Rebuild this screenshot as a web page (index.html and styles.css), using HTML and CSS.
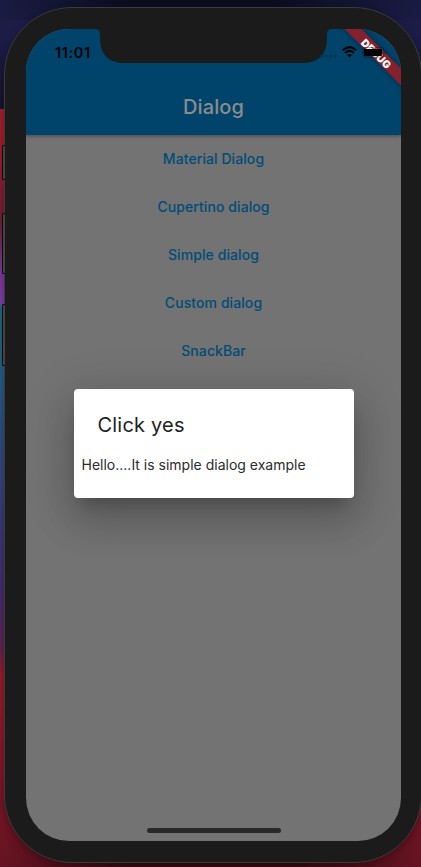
FILE: index.html
```html
<!DOCTYPE html>
<html lang="en">
<head>
<meta charset="utf-8">
<title>Dialog</title>
<link rel="stylesheet" href="styles.css">
</head>
<body>
<main class="desktop">
  <i class="key key-mute"></i>
  <i class="key key-up"></i>
  <i class="key key-down"></i>
  <div class="phone">
    <div class="screen">
      <header class="app-bar">
        <div class="status"><span class="time">11:01</span></div>
        <h1 class="title">Dialog</h1>
      </header>
      <nav class="menu">
        <a class="item material">Material Dialog</a>
        <a class="item cupertino">Cupertino dialog</a>
        <a class="item simple">Simple dialog</a>
        <a class="item custom">Custom dialog</a>
        <a class="item snack">SnackBar</a>
      </nav>
      <section class="dialog">
        <h2 class="dialog-title">Click yes</h2>
        <p class="dialog-text">Hello....It is simple dialog example</p>
      </section>
      <div class="debug"><span class="debug-text">DEBUG</span></div>
      <svg class="hardware" viewBox="0 0 375 60" width="375" height="60">
        <path d="M69 0Q74 0 74 5V10C74 25 83 34 97 34H278C292 34 301 25 301 10V5Q301 0 306 0Z" fill="#1b1b1b"/>
        <g fill="#003350"><circle cx="295.500" cy="27" r="1.500"/><circle cx="300" cy="27" r="1.500"/><circle cx="304.500" cy="27" r="1.500"/><circle cx="309" cy="27" r="1.500"/></g>
        <g fill="none" stroke="#000" stroke-width="2.100"><path d="M316.700 21.300Q323.500 14.800 330.300 21.300"/><path d="M319.200 24Q323.500 19.900 327.800 24"/></g>
        <path d="M321.200 26Q323.500 24 325.800 26L323.500 28.500Z"/>
        <rect x="337" y="18.500" width="21" height="9.500" rx="2.500" fill="none" stroke="#000" stroke-opacity=".3"/>
        <path d="M359.500 21.500q2 1.700 0 3.500z" opacity=".4"/>
        <rect x="338" y="20" width="18" height="7" rx=".8"/>
      </svg>
      <div class="home"></div>
    </div>
  </div>
</main>
</body>
</html>
```
FILE: styles.css
```css
* { box-sizing: border-box; }
body { margin: 0; overflow: hidden; font-family: Inter, "Liberation Sans", sans-serif; }
.desktop {
  position: relative;
  width: 421px;
  height: 867px;
  padding: 7px 0 0 4px;
  overflow: hidden;
  background:
    linear-gradient(90deg, transparent, rgba(0, 0, 0, .45) 30%, rgba(0, 0, 0, .45) 70%, transparent) 0 780px / 100% 87px no-repeat,
    linear-gradient(90deg, transparent, rgba(8, 8, 20, .75) 30%, rgba(8, 8, 20, .75) 65%, transparent) 0 0 / 100% 20px no-repeat,
    linear-gradient(#191b42 0, #1d1c48 35px, #17122f 109px, #a51f29 109px, #9c1c2c 155px, #701c34 220px, #7c3597 270px, #7d3cab 303px, #176981 309px, #265a85 380px, #34437b 480px, #432b6c 590px, #5a2352 645px, #951c28 675px, #8d1927 725px, #761525 800px, #651321 867px);
}
.phone {
  width: 418px;
  height: 856px;
  padding: 21px;
  border: 1px solid #3b3b3c;
  border-radius: 68px;
  background: #1b1b1b;
  box-shadow: 0 3px 8px rgba(0, 0, 0, .3);
}
.screen {
  position: relative;
  width: 375px;
  height: 812px;
  overflow: hidden;
  border-radius: 43px;
  background: #737373;
}
.key {
  position: absolute;
  left: 2px;
  width: 3px;
  border: 1px solid #09090a;
  border-right: 0;
  border-radius: 2px 0 0 2px;
  background: #444;
}
.key-mute { top: 145px; height: 35px; }
.key-up { top: 213px; height: 61px; }
.key-down { top: 304px; height: 62px; }
.app-bar {
  display: flex;
  flex-direction: column;
  height: 106px;
  background: #00446c;
  box-shadow: 0 1px 4px rgba(0, 0, 0, .4);
}
.status { height: 50px; padding: 14px 0 0 29px; }
.time { display: block; font-size: 14.500px; font-weight: 600; line-height: 19px; letter-spacing: .65px; }
.title { margin: 0; height: 56px; font-size: 20px; font-weight: 500; line-height: 57px; letter-spacing: .1px; text-align: center; color: #8c8c8c; }
.menu { display: flex; flex-direction: column; }
.item { height: 48px; font-size: 14px; font-weight: 500; line-height: 48px; letter-spacing: .08px; text-align: center; color: #004c78; }
.dialog {
  position: absolute;
  left: 47.500px;
  top: 359.500px;
  width: 280px;
  height: 109px;
  padding: 24px 8px;
  border-radius: 4px;
  background: #fff;
  box-shadow: 0 11px 15px -7px rgba(0, 0, 0, .2), 0 24px 38px 3px rgba(0, 0, 0, .14), 0 9px 46px 8px rgba(0, 0, 0, .12);
}
.dialog-title { margin: 0 16px; font-size: 20px; font-weight: 400; line-height: 24px; letter-spacing: .2px; color: #212121; }
.dialog-text { margin: 19px 0 0; font-size: 14px; line-height: 18px; white-space: nowrap; color: #2b2b2b; }
.debug {
  position: absolute;
  left: 301.250px;
  top: 17.750px;
  width: 100px;
  height: 12px;
  background: #85212e;
  box-shadow: 0 0 6px rgba(0, 0, 0, .4);
  text-align: center;
  line-height: 11px;
  transform: rotate(45deg);
}
.debug-text { font-size: 10.500px; font-weight: 900; letter-spacing: .1px; color: #fff; }
.hardware { position: absolute; left: 0; top: 0; }
.home { position: absolute; left: 121px; top: 799px; width: 134px; height: 5px; border-radius: 3px; background: #292929; }
```
